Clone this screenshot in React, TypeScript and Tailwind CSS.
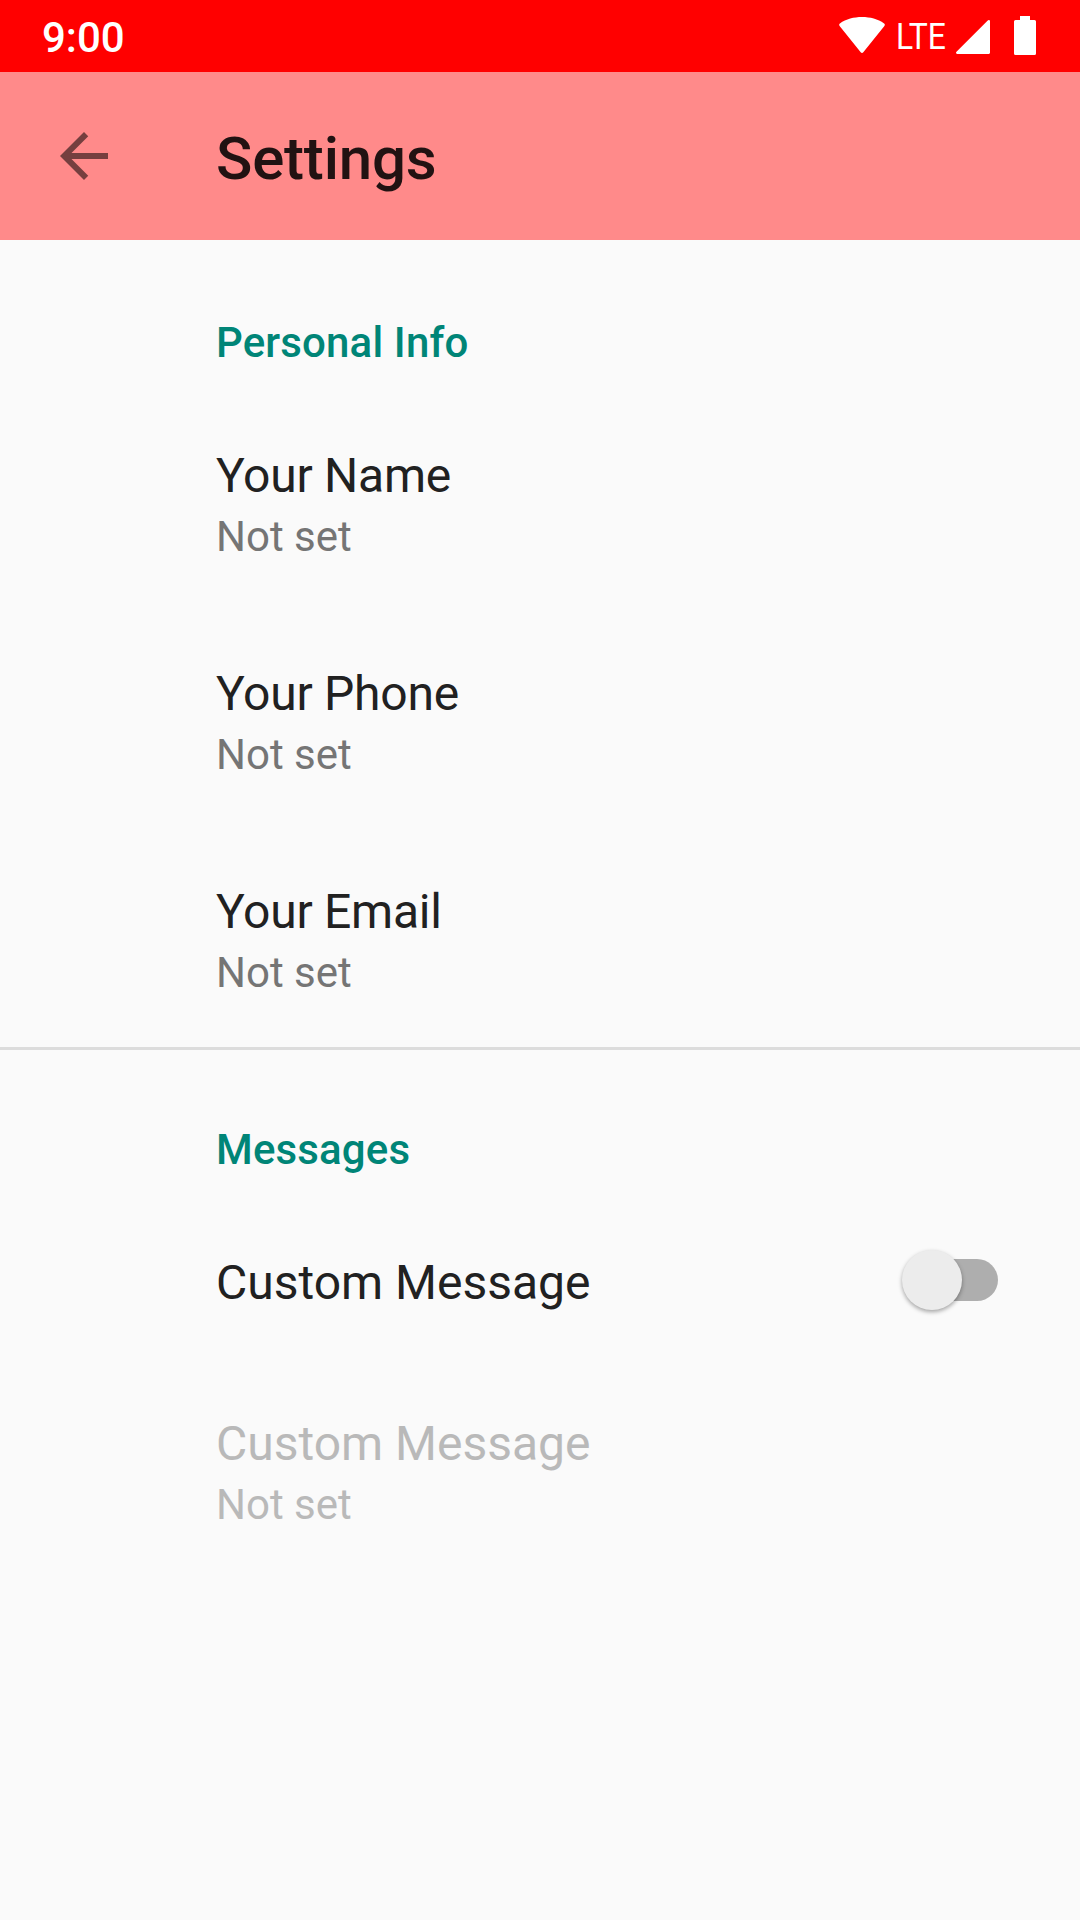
import React from "react";

function StatusBar() {
  return (
    <div className="flex h-[72px] items-start justify-between bg-[#ff0000] pl-[42px] pr-[44px] text-white">
      <span className="mt-[13px] text-[42px] font-medium leading-[50px]">9:00</span>
      <div className="flex h-[72px] items-start">
        <svg className="mt-[17px] h-[37px] w-[46px]" viewBox="0 0 46 37" fill="currentColor">
          <path d="M.6 8.9C-.1 8 .1 7 .9 6.400 7.200 2 14.800 0 23 0s15.800 2 22.100 6.400c.8.600 1 1.600.3 2.500L24.300 35.300c-.7.900-1.900.900-2.600 0z" />
        </svg>
        <span className="ml-[11px] mt-[15px] w-[60px] origin-left scale-x-[0.86] whitespace-nowrap text-[37px] leading-[44px]">
          LTE
        </span>
        <svg className="mt-[20px] h-[34px] w-[34px]" viewBox="0 0 34 34" fill="currentColor">
          <path d="M31.500.7C32.500-.3 34 0 34 1.500V32.500c0 .9-.6 1.500-1.500 1.500H1.300C0 34-.4 32.600.5 31.700z" />
        </svg>
        <svg className="ml-[24px] mt-[16px] h-[39px] w-[22px]" viewBox="0 0 22 39" fill="currentColor">
          <path d="M6 0H16V4H20.500A1.500 1.500 0 0 1 22 5.500V37.500A1.500 1.500 0 0 1 20.500 39H1.500A1.500 1.500 0 0 1 0 37.500V5.500A1.500 1.500 0 0 1 1.500 4H6z" />
        </svg>
      </div>
    </div>
  );
}

function AppBar() {
  return (
    <header className="flex h-[168px] items-center bg-[#ff8a8a] pl-[48px]">
      <svg className="h-[72px] w-[72px] text-black/54" viewBox="0 0 24 24" fill="currentColor">
        <path d="M20 11H7.830l5.590-5.590L12 4l-8 8 8 8 1.410-1.410L7.830 13H20v-2z" />
      </svg>
      <h1 className="ml-[96px] mt-[6px] text-[60px] font-medium leading-[70px] tracking-[-0.2px] text-black/87">
        Settings
      </h1>
    </header>
  );
}

function Category({ children }: { children: React.ReactNode }) {
  return (
    <h2 className="flex h-[150px] items-start pl-[216px] pt-[75px] text-[42px] font-medium leading-[50px] tracking-[0.15px] text-[#008577]">
      {children}
    </h2>
  );
}

function Preference({ title, disabled = false }: { title: string; disabled?: boolean }) {
  return (
    <div className="h-[218px] pl-[216px] pt-[55px]">
      <div className={`text-[48px] leading-[56px] ${disabled ? "text-[#b9b9b9]" : "tracking-[-0.25px] text-[#212121]"}`}>
        {title}
      </div>
      <div className={`mt-[8px] text-[42px] leading-[50px] ${disabled ? "text-[#b9b9b9]" : "text-[#757575]"}`}>
        Not set
      </div>
    </div>
  );
}

function Switch() {
  return (
    <div className="mt-[50px] flex h-[60px] w-[96px] items-center">
      <div className="z-10 h-[60px] w-[60px] shrink-0 rounded-full bg-[#ececec] shadow-[0_2px_4px_rgba(0,0,0,0.35)]" />
      <div className="-ml-[51px] h-[42px] w-[87px] shrink-0 rounded-full bg-[#aeaeae]" />
    </div>
  );
}

export default function App() {
  return (
    <div className="min-h-[1920px] w-[1080px] bg-[#fafafa] font-['Roboto',sans-serif]">
      <StatusBar />
      <AppBar />
      <section className="border-b-[3px] border-[#dcdcdc] pt-[3px]">
        <Category>Personal Info</Category>
        <Preference title="Your Name" />
        <Preference title="Your Phone" />
        <Preference title="Your Email" />
      </section>
      <section>
        <Category>Messages</Category>
        <div className="flex h-[161px] items-start justify-between pl-[216px] pr-[82px]">
          <span className="mt-[55px] text-[48px] leading-[56px] text-[#212121]">Custom Message</span>
          <Switch />
        </div>
        <Preference title="Custom Message" disabled />
      </section>
    </div>
  );
}
